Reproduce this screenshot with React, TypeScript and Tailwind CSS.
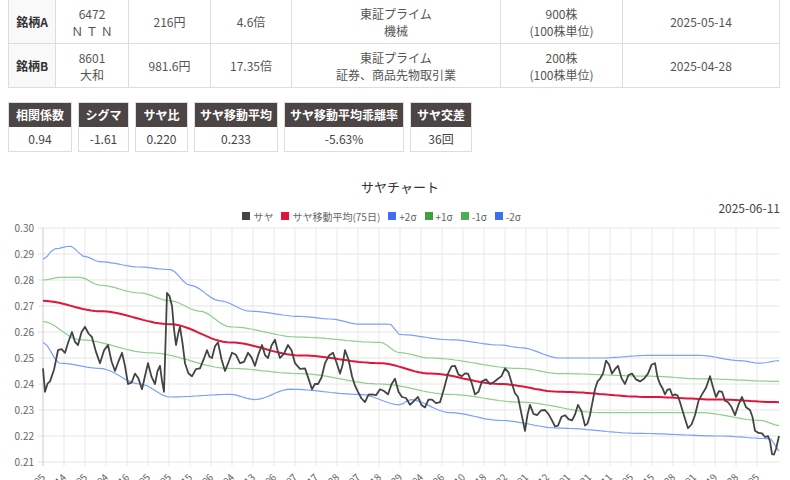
import React from "react";

const V2Y = (v: number) => 228 + (0.3 - v) * 2600;
type P = [number, number];
const path = (pts: P[]) => pts.map((p, i) => `${i ? "L" : "M"}${p[0]},${V2Y(p[1]).toFixed(1)}`).join(" ");
const smooth = (pts: P[]) => {
  const out: P[] = [];
  for (let x = 43; x <= 780; x += 4) {
    let i = 0;
    while (i < pts.length - 2 && pts[i + 1][0] < x) i++;
    const [x0, y0] = pts[i], [x1, y1] = pts[i + 1];
    const t = Math.min(1, Math.max(0, (x - x0) / (x1 - x0)));
    const s = t * t * (3 - 2 * t);
    out.push([x, y0 + (y1 - y0) * s]);
  }
  return out;
};

const p2: P[] = [[43,0.288],[55,0.292],[70,0.293],[85,0.289],[100,0.287],[140,0.285],[170,0.284],[190,0.278],[220,0.272],[250,0.268],[300,0.266],[330,0.265],[360,0.263],[390,0.263],[400,0.259],[450,0.257],[500,0.255],[520,0.254],[560,0.25],[600,0.25],[650,0.251],[700,0.251],[740,0.249],[760,0.248],[780,0.249]];
const p1: P[] = [[43,0.28],[60,0.281],[80,0.281],[100,0.278],[140,0.275],[170,0.272],[200,0.268],[230,0.262],[300,0.258],[380,0.256],[400,0.252],[430,0.25],[520,0.246],[560,0.244],[650,0.243],[700,0.242],[780,0.241]];
const ma: P[] = [[43,0.272],[100,0.268],[170,0.263],[230,0.256],[300,0.251],[380,0.248],[430,0.244],[500,0.24],[560,0.237],[650,0.235],[720,0.234],[780,0.233]];
const m1: P[] = [[43,0.264],[80,0.257],[150,0.252],[230,0.246],[300,0.244],[380,0.24],[450,0.236],[520,0.233],[600,0.229],[700,0.229],[760,0.226],[780,0.224]];
const m2: P[] = [[43,0.256],[60,0.248],[100,0.246],[140,0.24],[170,0.235],[230,0.236],[255,0.234],[290,0.238],[360,0.236],[400,0.232],[410,0.234],[450,0.229],[500,0.226],[560,0.223],[640,0.221],[720,0.22],[770,0.219],[780,0.214]];
const saya: P[] = [[43,0.246],[45,0.237],[50,0.241],[58,0.253],[65,0.252],[72,0.26],[78,0.255],[85,0.262],[92,0.258],[100,0.248],[108,0.255],[115,0.245],[122,0.252],[128,0.24],[135,0.244],[142,0.238],[148,0.248],[155,0.24],[160,0.247],[164,0.237],[167,0.275],[172,0.27],[176,0.255],[180,0.262],[185,0.248],[192,0.243],[200,0.246],[207,0.253],[212,0.25],[218,0.256],[225,0.245],[232,0.252],[240,0.248],[248,0.252],[255,0.247],[262,0.255],[268,0.25],[275,0.257],[280,0.25],[288,0.255],[295,0.248],[305,0.246],[312,0.238],[318,0.24],[325,0.248],[333,0.252],[340,0.244],[345,0.253],[352,0.243],[358,0.237],[365,0.233],[372,0.236],[380,0.238],[388,0.236],[395,0.242],[402,0.235],[410,0.232],[418,0.235],[425,0.231],[432,0.234],[440,0.233],[448,0.244],[455,0.247],[462,0.243],[468,0.244],[475,0.236],[482,0.241],[490,0.24],[498,0.242],[505,0.246],[512,0.24],[518,0.235],[525,0.222],[530,0.232],[537,0.228],[545,0.23],[552,0.226],[558,0.224],[565,0.228],[572,0.226],[578,0.232],[585,0.224],[590,0.228],[595,0.238],[600,0.242],[606,0.249],[612,0.244],[618,0.247],[625,0.24],[632,0.244],[640,0.241],[648,0.244],[655,0.248],[660,0.24],[665,0.236],[670,0.238],[675,0.236],[680,0.233],[688,0.223],[695,0.228],[702,0.236],[710,0.243],[716,0.235],[722,0.237],[728,0.233],[735,0.228],[742,0.235],[750,0.23],[755,0.222],[762,0.221],[768,0.22],[772,0.213],[776,0.215],[779,0.22]];
const sayaPts: P[] = [];
for (let i = 0; i < saya.length - 1; i++) {
  const [x0, y0] = saya[i], [x1, y1] = saya[i + 1];
  sayaPts.push([x0, y0]);
  const mx = (x0 + x1) / 2;
  sayaPts.push([mx, (y0 + y1) / 2 + Math.sin(i * 2.3) * 0.0015]);
}
sayaPts.push(saya[saya.length - 1]);

const xl = ["05","14","05","04","16","05","05","15","06","04","13","06","07","17","28","07","18","29","04","26","10","18","22","01","12","01","21","11","05","15","28","01","19","28","05"];

const ff = { fontFamily: '"Noto Sans CJK JP", "Liberation Sans", sans-serif' };

function Cell({ children, w, head }: { children: React.ReactNode; w: string; head?: boolean }) {
  return (
    <div className={`${w} border-r border-[#ddd] flex flex-col items-center justify-center leading-[17px] text-[12px] ${head ? "font-bold text-[#333] bg-[#f9f9f9]" : "text-[#555]"}`}>
      {children}
    </div>
  );
}

function Row({ a }: { a: string[][] }) {
  const ws = ["w-[47px]", "w-[73px]", "w-[82px]", "w-[81px]", "w-[209px]", "w-[122px]", "flex-1"];
  return (
    <div className="flex h-[44px] border-b border-[#ddd]">
      {a.map((c, i) => (
        <Cell key={i} w={ws[i]} head={i === 0}>
          {c.map((t, j) => <span key={j}>{t}</span>)}
        </Cell>
      ))}
    </div>
  );
}

const stats = [["相関係数","0.94","w-[64px]"],["シグマ","-1.61","w-[51px]"],["サヤ比","0.220","w-[53px]"],["サヤ移動平均","0.233","w-[84px]"],["サヤ移動平均乖離率","-5.63%","w-[120px]"],["サヤ交差","36回","w-[62px]"]];

export default function App() {
  return (
    <div className="w-[790px] h-[480px] overflow-hidden bg-white relative" style={ff}>
      <div className="ml-[8px] mr-[10px] -mt-[1px] border-l border-t border-[#ddd]">
        <Row a={[["銘柄A"],["6472","Ｎ Ｔ Ｎ"],["216円"],["4.6倍"],["東証プライム","機械"],["900株","(100株単位)"],["2025-05-14"]]} />
        <Row a={[["銘柄B"],["8601","大和"],["981.6円"],["17.35倍"],["東証プライム","証券、商品先物取引業"],["200株","(100株単位)"],["2025-04-28"]]} />
      </div>
      <div className="flex gap-[6px] ml-[8px] mt-[14px]">
        {stats.map(([h, v, w]) => (
          <div key={h} className={`${w} border border-[#ddd]`}>
            <div className="h-[24px] bg-[#4b4545] text-white text-[12px] font-bold flex items-center justify-center">{h}</div>
            <div className="h-[24px] text-[12px] text-[#444] flex items-center justify-center">{v}</div>
          </div>
        ))}
      </div>
      <div className="text-center text-[13px] text-[#333] mt-[25px] ml-[10px]">サヤチャート</div>
      <div className="flex items-end mt-[2px]">
        <div className="flex-1 flex justify-center gap-[8px] text-[10px] text-[#666] ml-[45px]">
          {[["サヤ","#444"],["サヤ移動平均(75日)","#e0143c"],["+2σ","#3b6ef0"],["+1σ","#3ea33e"],["-1σ","#4caf50"],["-2σ","#3b6ef0"]].map(([t, c]) => (
            <span key={t} className="flex items-center gap-[3px]"><span className="w-[8px] h-[8px] inline-block" style={{ background: c }} />{t}</span>
          ))}
        </div>
        <div className="text-[12px] text-[#444] mr-[10px] mb-[7px]">2025-06-11</div>
      </div>
      <svg className="absolute left-0 top-0" width="790" height="480">
        {Array.from({ length: 10 }, (_, i) => {
          const y = 228 + i * 26;
          return (
            <g key={i}>
              <line x1={38} x2={780} y1={y} y2={y} stroke="#e5e5e5" />
              <text x={34} y={y + 4} fontSize="10" fill="#666" textAnchor="end" style={ff}>{(0.3 - i * 0.01).toFixed(2)}</text>
            </g>
          );
        })}
        {xl.map((l, i) => {
          const x = 43 + i * 21;
          return (
            <g key={i}>
              <line x1={x} x2={x} y1={228} y2={466} stroke={i === 0 ? "#ccc" : "#e8e8e8"} />
              <text x={x + 3} y={478} fontSize="10" fill="#666" textAnchor="end" transform={`rotate(-45 ${x + 3} 478)`} style={ff}>{l}</text>
            </g>
          );
        })}
        <path d={path(smooth(p2))} fill="none" stroke="#7aa0ff" strokeWidth="1.2" />
        <path d={path(smooth(p1))} fill="none" stroke="#8ed08e" strokeWidth="1.2" />
        <path d={path(smooth(m1))} fill="none" stroke="#8ed08e" strokeWidth="1.2" />
        <path d={path(smooth(m2))} fill="none" stroke="#7aa0ff" strokeWidth="1.2" />
        <path d={path(smooth(ma))} fill="none" stroke="#e0143c" strokeWidth="2" />
        <path d={path(sayaPts)} fill="none" stroke="#444" strokeWidth="1.8" strokeLinejoin="round" />
      </svg>
    </div>
  );
}
